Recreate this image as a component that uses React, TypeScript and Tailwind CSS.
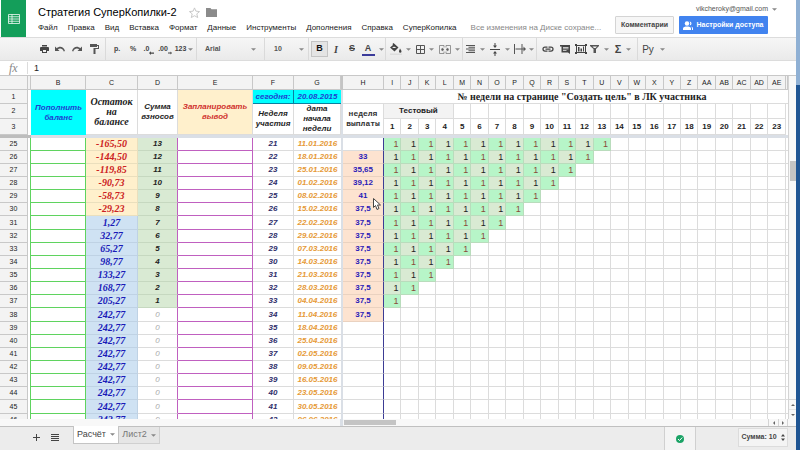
import type { ReactNode } from 'react';

const menu = [
  'Файл',
  'Правка',
  'Вид',
  'Вставка',
  'Формат',
  'Данные',
  'Инструменты',
  'Дополнения',
  'Справка',
  'СуперКопилка',
];

const weekColumns = [
  'I', 'J', 'K', 'L', 'M', 'N', 'O', 'P', 'Q', 'R', 'S', 'T',
  'U', 'V', 'W', 'X', 'Y', 'Z', 'AA', 'AB', 'AC', 'AD', 'AE',
];

type Row = {
  id: number;
  balance: string;
  sum: number;
  week: number;
  date: string;
  payout: string;
};

const rows: Row[] = [
  { id: 25, balance: '-165,50', sum: 13, week: 21, date: '11.01.2016', payout: '' },
  { id: 26, balance: '-144,50', sum: 12, week: 22, date: '18.01.2016', payout: '33' },
  { id: 27, balance: '-119,85', sum: 11, week: 23, date: '25.01.2016', payout: '35,65' },
  { id: 28, balance: '-90,73', sum: 10, week: 24, date: '01.02.2016', payout: '39,12' },
  { id: 29, balance: '-58,73', sum: 9, week: 25, date: '08.02.2016', payout: '41' },
  { id: 30, balance: '-29,23', sum: 8, week: 26, date: '15.02.2016', payout: '37,5' },
  { id: 31, balance: '1,27', sum: 7, week: 27, date: '22.02.2016', payout: '37,5' },
  { id: 32, balance: '32,77', sum: 6, week: 28, date: '29.02.2016', payout: '37,5' },
  { id: 33, balance: '65,27', sum: 5, week: 29, date: '07.03.2016', payout: '37,5' },
  { id: 34, balance: '98,77', sum: 4, week: 30, date: '14.03.2016', payout: '37,5' },
  { id: 35, balance: '133,27', sum: 3, week: 31, date: '21.03.2016', payout: '37,5' },
  { id: 36, balance: '168,77', sum: 2, week: 32, date: '28.03.2016', payout: '37,5' },
  { id: 37, balance: '205,27', sum: 1, week: 33, date: '04.04.2016', payout: '37,5' },
  { id: 38, balance: '242,77', sum: 0, week: 34, date: '11.04.2016', payout: '37,5' },
  { id: 39, balance: '242,77', sum: 0, week: 35, date: '18.04.2016', payout: '' },
  { id: 40, balance: '242,77', sum: 0, week: 36, date: '25.04.2016', payout: '' },
  { id: 41, balance: '242,77', sum: 0, week: 37, date: '02.05.2016', payout: '' },
  { id: 42, balance: '242,77', sum: 0, week: 38, date: '09.05.2016', payout: '' },
  { id: 43, balance: '242,77', sum: 0, week: 39, date: '16.05.2016', payout: '' },
  { id: 44, balance: '242,77', sum: 0, week: 40, date: '23.05.2016', payout: '' },
  { id: 45, balance: '242,77', sum: 0, week: 41, date: '30.05.2016', payout: '' },
  { id: 46, balance: '242,77', sum: 0, week: 42, date: '06.06.2016', payout: '' },
];

const line = 'border-r border-b border-[#dcdcdc]';
const head = 'border-r border-b border-[#c8c8c8] bg-[#f3f3f3] text-[7px] font-normal text-[#222]';

function Caret() {
  return (
    <svg viewBox="0 0 6 3" className="h-[3px] w-[5px] shrink-0 fill-[#888]">
      <path d="M0 0h6L3 3z" />
    </svg>
  );
}

function Tool({ label, width, children }: { label: string; width: string; children: ReactNode }) {
  return (
    <button
      type="button"
      aria-label={label}
      className={`flex h-4 shrink-0 items-center justify-center text-[7px] font-bold text-[#444] ${width}`}
    >
      {children}
    </button>
  );
}

function Divider() {
  return <span className="h-full w-px shrink-0 bg-[#dadada]" />;
}

function Toolbar() {
  return (
    <div className="flex h-6 shrink-0 items-center border-y border-[#dcdcdc] bg-linear-to-b from-[#f6f6f6] to-[#eaeaea] pl-9">
      <Tool label="Печать" width="w-4">
        <svg viewBox="0 0 18 16" className="h-2 w-[9px] fill-[#444]">
          <path d="M4 0h10v3H4zM2 4h14a2 2 0 0 1 2 2v6h-4v4H4v-4H0V6a2 2 0 0 1 2-2zm4 6v4h6v-4z" fillRule="evenodd" />
        </svg>
      </Tool>
      <Tool label="Отменить" width="w-4">
        <svg viewBox="0 0 20 12" className="h-[6px] w-[10px] fill-[#555]">
          <path d="M0 1v9h9L5.700 6.700C9 4 15 4 17.500 11l2.500-1C17 0 8 0 3.600 4.600z" />
        </svg>
      </Tool>
      <Tool label="Повторить" width="w-[18px]">
        <svg viewBox="0 0 20 12" className="h-[6px] w-[10px] fill-[#555]">
          <path d="M20 1v9h-9l3.300-3.300C11 4 5 4 2.500 11L0 10C3 0 12 0 16.400 4.600z" />
        </svg>
      </Tool>
      <Tool label="Копировать форматирование" width="w-4">
        <svg viewBox="0 0 18 20" className="h-[10px] w-[9px] fill-[#555]">
          <path d="M0 0h14v2h4v8h-7v10H7V8h9V4h-2v2H0z" />
        </svg>
      </Tool>
      <span className="w-[3px] shrink-0" />
      <Divider />
      <span className="w-[3px] shrink-0" />
      <Tool label="Рубли" width="w-4">р.</Tool>
      <Tool label="Проценты" width="w-4">%</Tool>
      <Tool label="Меньше знаков" width="w-4">
        <span>.0</span>
        <svg viewBox="0 0 8 6" className="mt-2 h-[4px] w-[5px] fill-[#444]">
          <path d="M0 3l3-3v2h5v2H3v2z" />
        </svg>
      </Tool>
      <Tool label="Больше знаков" width="w-4">
        <span>.00</span>
        <svg viewBox="0 0 8 6" className="mt-2 h-[4px] w-[4px] fill-[#444]">
          <path d="M8 3L5 0v2H0v2h5v2z" />
        </svg>
      </Tool>
      <Tool label="Другие форматы" width="w-[22px] gap-[2px]">
        123 <Caret />
      </Tool>
      <span className="w-px shrink-0" />
      <Divider />
      <button type="button" className="flex h-4 w-[67px] shrink-0 items-center justify-between pr-2 pl-2 text-[7px] font-bold text-[#555]">
        Arial <Caret />
      </button>
      <Divider />
      <button type="button" className="flex h-4 w-[43px] shrink-0 items-center justify-between pr-1 pl-[9px] text-[7px] font-bold text-[#555]">
        10 <Caret />
      </button>
      <Divider />
      <Tool label="Полужирный" width="ml-[2px] w-[17px] border border-[#c4c4c4] bg-[#e4e4e4]">
        <span className="text-[9px] font-black text-[#111]">B</span>
      </Tool>
      <Tool label="Курсив" width="w-4">
        <span className="font-['Liberation_Serif',serif] text-[10px] italic">I</span>
      </Tool>
      <Tool label="Зачеркнутый" width="w-4">
        <span className="text-[9px] line-through">S</span>
      </Tool>
      <Tool label="Цвет текста" width="w-[25px] gap-[4px]">
        <span className="w-[13px] border-b-2 border-[#3b3b9a] text-[9px] leading-[11px]">A</span>
        <Caret />
      </Tool>
      <Divider />
      <Tool label="Цвет заливки" width="w-[28px] gap-[4px]">
        <svg viewBox="0 0 24 24" className="h-3 w-3 fill-[#444]">
          <path d="M7 0l10 9-8 8-9-8 6-5-1-2zM8 7L4 10h9zM20 11s3 4 3 6a2.500 2.500 0 0 1-5 0c0-2 2-6 2-6z" />
          <path d="M0 21h24v3H0z" className="fill-[#ddd]" />
        </svg>
        <Caret />
      </Tool>
      <Tool label="Границы" width="w-[22px] gap-[4px]">
        <svg viewBox="0 0 18 18" className="h-[9px] w-[9px] fill-none stroke-[#555] stroke-2">
          <path d="M1 1h16v16H1zM9 1v16M1 9h16" />
        </svg>
        <Caret />
      </Tool>
      <Tool label="Объединить ячейки" width="w-[26px] gap-[4px]">
        <svg viewBox="0 0 24 18" className="h-[9px] w-3 fill-[#555] stroke-[#777] stroke-[1.500]">
          <path d="M10 1H1v16h9M14 1h9v16h-9M10 1v4M14 1v4M10 13v4M14 13v4" fill="none" />
          <path d="M4 9h2V6l4 3-4 3V9M20 9h-2V6l-4 3 4 3V9" />
        </svg>
        <Caret />
      </Tool>
      <Divider />
      <Tool label="Выравнивание по горизонтали" width="w-[25px] gap-[5px]">
        <svg viewBox="0 0 18 16" className="h-2 w-[9px] fill-none stroke-[#555] stroke-2">
          <path d="M0 1h18M5 4.500h13M0 8h18M5 11.500h13M0 15h18" />
        </svg>
        <Caret />
      </Tool>
      <Tool label="Выравнивание по вертикали" width="w-[24px] gap-[5px]">
        <svg viewBox="0 0 20 26" className="h-[13px] w-[10px] fill-[#444]">
          <path d="M0 12h20v2H0zM9 0h2v5h3l-4 5-4-5h3zM9 26h2v-5h3l-4-5-4 5h3z" />
        </svg>
        <Caret />
      </Tool>
      <Tool label="Перенос текста" width="w-[24px] gap-[3px]">
        <svg viewBox="0 0 24 20" className="h-[10px] w-3 fill-[#555]">
          <path d="M0 0h2v20H0zM15 0h2v20h-2zM3 9h16V5l5 5-5 5v-4H3z" />
        </svg>
        <Caret />
      </Tool>
      <Divider />
      <Tool label="Вставить ссылку" width="ml-[2px] w-[17px]">
        <svg viewBox="0 0 24 12" className="h-[6px] w-3 fill-none stroke-[#444] stroke-[2.500]">
          <path d="M11 2H6a4 4 0 0 0 0 8h5M13 2h5a4 4 0 0 1 0 8h-5M7 6h10" />
        </svg>
      </Tool>
      <Tool label="Вставить комментарий" width="w-[17px]">
        <svg viewBox="0 0 20 18" className="h-[9px] w-[10px] fill-[#444]">
          <path d="M0 0h20v18l-4-3H3V3H0zM6 4v1.500h11V4zm0 3v1.500h11V7zm0 3v1.500h7V10z" fillRule="evenodd" />
        </svg>
      </Tool>
      <Tool label="Вставить диаграмму" width="w-[15px]">
        <svg viewBox="0 0 24 20" className="h-[10px] w-3 fill-[#444]">
          <path d="M0 0h4v2h16V0h4v4h-2v12h2v4h-4v-2H4v2H0v-4h2V4H0zm4 4v12h16V4zM6 6h3v9H6zM11 9h3v6h-3zM16 5h2v10h-2z" fillRule="evenodd" />
        </svg>
      </Tool>
      <Tool label="Фильтр" width="w-[23px] gap-[5px]">
        <svg viewBox="0 0 18 16" className="h-2 w-[9px] fill-[#555]">
          <path d="M0 0h18v2l-6 6v8H7V8L0 2zM5 3l3 3h3l3-3z" fillRule="evenodd" />
        </svg>
        <Caret />
      </Tool>
      <Tool label="Функции" width="w-[24px] gap-[5px]">
        <span className="text-[11px]">Σ</span>
        <Caret />
      </Tool>
      <span className="w-[2px] shrink-0" />
      <Divider />
      <Tool label="Способ ввода" width="w-[31px] gap-[6px]">
        <span className="text-[10px] font-normal">Ру</span>
        <Caret />
      </Tool>
    </div>
  );
}

function Header() {
  return (
    <header className="flex h-[37px] shrink-0 pl-px">
      <a href="#" aria-label="Таблицы" className="flex w-[25px] shrink-0 items-center justify-center bg-[#149e5a]">
        <svg viewBox="0 0 24 20" className="h-[10px] w-3 fill-none stroke-white stroke-[1.500]">
          <path d="M1 1h22v18H1zM1 5.500h22M1 10h22M1 14.500h22M8 1v18" />
        </svg>
      </a>
      <div className="min-w-0 flex-1 pt-1 pl-3">
        <div className="flex h-[17px] items-center">
          <h1 className="text-[11px] text-black">Стратегия СуперКопилки-2</h1>
          <button type="button" aria-label="Пометить" className="ml-3">
            <svg viewBox="0 0 24 24" className="h-[11px] w-[11px] fill-none stroke-[#c4c4c4] stroke-2">
              <path d="M12 2l3 7 8 1-6 5 2 8-7-4-7 4 2-8-6-5 8-1z" />
            </svg>
          </button>
          <button type="button" aria-label="Переместить" className="ml-[6px]">
            <svg viewBox="0 0 20 16" className="h-[9px] w-[11px] fill-[#8b8b8b]">
              <path d="M0 0h8l2 2h10v14H0z" />
            </svg>
          </button>
        </div>
        <nav className="flex h-[14px] items-center gap-[10px] text-[8px] whitespace-nowrap text-[#222]">
          {menu.map((item) => (
            <button key={item} type="button">
              {item}
            </button>
          ))}
          <span className="ml-1 text-[#888]">Все изменения на Диске сохране...</span>
        </nav>
      </div>
      <div className="flex shrink-0 flex-col items-end gap-[2px] pt-1 pr-7 pl-1">
        <button type="button" className="-mr-[9px] flex h-[10px] items-center gap-1 text-[7px] text-[#555]">
          vikcheroky@gmail.com <Caret />
        </button>
        <div className="flex gap-[5px] text-[7px] font-bold whitespace-nowrap">
          <button type="button" className="h-[18px] w-[59px] rounded-[1px] border border-[#d4d4d4] bg-[#f6f6f6] text-[#444]">
            Комментарии
          </button>
          <button type="button" className="flex h-[18px] w-[89px] items-center justify-center gap-[3px] rounded-[1px] bg-[#4183ef] text-white">
            <svg viewBox="0 0 20 18" className="h-[9px] w-[10px] shrink-0 fill-white">
              <circle cx="8" cy="5" r="4.500" />
              <path d="M0 18v-3c0-3 4-4 8-4s8 1 8 4v3zM13 1a4 4 0 0 1 0 8c2-3 2-5 0-8zM16 11c3 1 4 2 4 4v3h-2v-3c0-2-1-3-2-4z" />
            </svg>
            Настройки доступа
          </button>
        </div>
      </div>
    </header>
  );
}

function SheetHead() {
  return (
    <thead>
      <tr className="h-[14px]">
        <th className={head} />
        <th className={head} aria-label="A" />
        {['B', 'C', 'D', 'E', 'F', 'G'].map((name) => (
          <th key={name} className={head}>{name}</th>
        ))}
        <th className="bg-[#c4c4c4]" />
        <th className={head}>H</th>
        {weekColumns.map((name) => (
          <th key={name} className={head}>{name}</th>
        ))}
        <th className={head} />
      </tr>
      <tr className="h-[14px]">
        <th className={head}>1</th>
        <td />
        <th rowSpan={3} className="bg-[#00ffff] leading-[10px] text-[#1f3fd0] italic">
          Пополнить баланс
        </th>
        <th rowSpan={3} className={`${line} px-1 font-['Liberation_Serif',serif] text-[10px] leading-[10px] italic`}>
          Остаток на балансе
        </th>
        <th rowSpan={3} className={`${line} leading-[10px] italic`}>Сумма взносов</th>
        <th rowSpan={3} className={`${line} bg-[#fff0cc] leading-[10px] text-[#d0312d] italic`}>
          Запланировать вывод
        </th>
        <th className="border-r border-b border-[#0a7f9f] bg-[#00ffff] text-[#1f3fd0] italic">сегодня:</th>
        <th className="border-b border-[#0a7f9f] bg-[#00ffff] text-[#1f3fd0] italic">20.08.2015</th>
        <td className="bg-[#dadfe6]" />
        <td className="border-b border-[#dcdcdc]" />
        <th colSpan={24} className="border-b border-[#dcdcdc] pr-2 font-['Liberation_Serif',serif] text-[10px]">
          № недели на странице "Создать цель" в ЛК участника
        </th>
      </tr>
      <tr className="h-[15px]">
        <th className={head}>2</th>
        <td />
        <th rowSpan={2} className={`${line} leading-[10px] italic`}>Неделя участия</th>
        <th rowSpan={2} className={`${line} px-2 leading-[10px] italic`}>дата начала недели</th>
        <td className="bg-[#dadfe6]" />
        <th rowSpan={2} className={`${line} font-['Liberation_Mono',monospace] leading-[10px] text-[#333]`}>
          неделя выплаты
        </th>
        <th colSpan={4} className={`${line} bg-[#f3f3f3]`}>Тестовый</th>
        {weekColumns.slice(4).map((name) => (
          <td key={name} className={line} />
        ))}
        <td />
      </tr>
      <tr className="h-4">
        <th className={head}>3</th>
        <td />
        <td className="bg-[#dadfe6]" />
        {weekColumns.map((name, i) => (
          <th key={name} className={line}>{i + 1}</th>
        ))}
        <td />
      </tr>
      <tr className="h-[3px]">
        <td colSpan={2} className="bg-[#bdbdbd]" />
        <td colSpan={32} className="bg-[#dadfe6]" />
      </tr>
    </thead>
  );
}

function SheetRow({ row }: { row: Row }) {
  const negative = row.balance.startsWith('-');
  return (
    <tr className="h-[13px] nth-[7n]:h-[14px]">
      <th className={head}>{row.id}</th>
      <td className="border-r border-[#5fd35f]" />
      <td className="border-r border-b border-[#5fd35f]" />
      <td
        className={`border-r border-b font-['Liberation_Serif',serif] text-[10px] font-bold italic ${
          negative ? 'border-[#eadfbd] bg-[#fff0cc] text-[#cc2222]' : 'border-[#bfd2e4] bg-[#cfe2f3] text-[#1a1ab8]'
        }`}
      >
        {row.balance}
      </td>
      <td
        className={`border-r border-b border-r-[#c060c0] italic ${
          row.sum > 0 ? 'border-b-[#c6d8c0] bg-[#d9ead3] font-bold text-[#222]' : 'border-b-[#dcdcdc] text-[#aaa]'
        }`}
      >
        {row.sum}
      </td>
      <td className="border-r border-b border-[#c060c0]" />
      <td className={`${line} font-bold text-[#2f2f6b] italic`}>{row.week}</td>
      <td className="border-b border-[#dcdcdc] font-bold text-[#e69a38] italic">{row.date}</td>
      <td className="bg-[#dadfe6]" />
      <td
        className={`border-r border-b border-r-[#3c3c94] font-bold text-[#2a1ab8] ${
          row.payout ? 'border-b-[#ead2c0] bg-[#fde3d0]' : 'border-b-[#dcdcdc]'
        }`}
      >
        {row.payout}
      </td>
      {weekColumns.map((name, i) => {
        if (i >= row.sum) return <td key={name} className={line} />;
        const bright = (row.sum - i) % 2 === 1;
        return (
          <td
            key={name}
            className={`border-r border-b border-[#b9dcbc] pr-[2px] text-right text-[9px] ${
              bright ? 'bg-[#b7f5c8] text-[#8a4a3a]' : 'bg-[#d9ead3] text-[#222]'
            }`}
          >
            1
          </td>
        );
      })}
      <td className="border-b border-[#dcdcdc]" />
    </tr>
  );
}

function Sheet() {
  return (
    <table className="w-full table-fixed border-separate border-spacing-0 text-center text-[8px] leading-3 text-[#222]">
      <colgroup>
        <col className="w-[28px]" />
        <col className="w-[3px]" />
        <col className="w-[55px]" />
        <col className="w-[52px]" />
        <col className="w-[40px]" />
        <col className="w-[75px]" />
        <col className="w-[41px]" />
        <col className="w-[47px]" />
        <col className="w-[2px]" />
        <col className="w-[41px]" />
        {weekColumns.map((name) => (
          <col key={name} />
        ))}
        <col className="w-[2px]" />
      </colgroup>
      <SheetHead />
      <tbody>
        {rows.map((row) => (
          <SheetRow key={row.id} row={row} />
        ))}
      </tbody>
    </table>
  );
}

function VerticalScroll() {
  return (
    <div className="flex w-2 shrink-0 flex-col border-l border-[#d4d4d4] bg-[#f8f8f8]">
      <div className="h-[85px]" />
      <div className="ml-px h-5 bg-[#c4c4c4]" />
      <div className="flex-1" />
      <button type="button" aria-label="Вверх" className="flex h-[10px] items-center justify-center border-t border-[#d4d4d4]">
        <svg viewBox="0 0 6 3" className="h-[2px] w-1 fill-[#666]"><path d="M0 3h6L3 0z" /></svg>
      </button>
      <button type="button" aria-label="Вниз" className="flex h-[10px] items-center justify-center border-t border-[#e4e4e4]">
        <svg viewBox="0 0 6 3" className="h-[2px] w-1 fill-[#666]"><path d="M0 0h6L3 3z" /></svg>
      </button>
    </div>
  );
}

function HorizontalScroll() {
  return (
    <div className="flex h-[7px] shrink-0 bg-[#f8f8f8] pr-2">
      <div className="w-[340px] shrink-0" />
      <div className="w-[3px] shrink-0 bg-[#dadfe6]" />
      <div className="mt-px ml-px h-[5px] w-[52px] bg-[#c4c4c4]" />
      <div className="flex-1" />
      <button type="button" aria-label="Влево" className="flex w-[10px] items-center justify-center border-l border-[#d4d4d4]">
        <svg viewBox="0 0 3 6" className="h-1 w-[2px] fill-[#666]"><path d="M3 0v6L0 3z" /></svg>
      </button>
      <button type="button" aria-label="Вправо" className="flex w-[10px] items-center justify-center border-x border-[#d4d4d4]">
        <svg viewBox="0 0 3 6" className="h-1 w-[2px] fill-[#666]"><path d="M0 0v6l3-3z" /></svg>
      </button>
    </div>
  );
}

function BottomBar() {
  return (
    <footer className="flex h-6 shrink-0 border-t border-[#c0c0c0] bg-[#ececec] pr-2 text-[9px]">
      <button type="button" aria-label="Добавить лист" className="ml-[30px] flex h-5 w-3 items-center justify-center">
        <svg viewBox="0 0 14 14" className="h-[7px] w-[7px] fill-[#444]"><path d="M6 0h2v6h6v2H8v6H6V8H0V6h6z" /></svg>
      </button>
      <button type="button" aria-label="Все листы" className="ml-[7px] flex h-5 w-3 items-center justify-center">
        <svg viewBox="0 0 16 14" className="h-[7px] w-2 fill-none stroke-[#444] stroke-2"><path d="M0 1h16M0 5h16M0 9h16M0 13h16" /></svg>
      </button>
      <button type="button" className="-mt-px ml-3 flex h-[18px] w-[46px] items-center justify-center gap-1 border border-t-0 border-[#c4c4c4] bg-white text-[#444]">
        Расчёт <Caret />
      </button>
      <button type="button" className="flex h-[17px] w-[41px] items-center justify-center gap-1 border-r border-b border-[#d0d0d0] bg-[#e6e6e6] text-[#777]">
        Лист2 <Caret />
      </button>
      <div className="flex-1" />
      <div className="flex w-8 items-center justify-center border-x border-[#d0d0d0] bg-[#f4f4f4]">
        <svg viewBox="0 0 16 16" className="h-2 w-2">
          <circle cx="8" cy="8" r="8" fill="#1ba366" />
          <path d="M4 8l3 3 5.500-6" fill="none" stroke="#fff" strokeWidth="2" />
        </svg>
      </div>
      <button type="button" className="mt-px ml-[42px] flex h-[19px] w-[50px] items-center justify-center gap-1 border border-[#dcdcdc] bg-[#f4f4f4] text-[7px] font-bold whitespace-nowrap text-[#444]">
        Сумма: 10
        <svg viewBox="0 0 8 14" className="h-[7px] w-1 fill-[#444]"><path d="M0 5l4-5 4 5zM0 9h8l-4 5z" /></svg>
      </button>
    </footer>
  );
}

export default function App() {
  return (
    <div className="relative flex h-screen overflow-hidden bg-white font-['Liberation_Sans',Arial,sans-serif]">
      <main className="flex min-w-0 flex-1 flex-col">
        <Header />
        <Toolbar />
        <label className="flex h-[14px] shrink-0 items-center text-[9px] text-[#222]">
          <span className="w-7 border-r border-[#dcdcdc] pl-[9px] font-['Liberation_Serif',serif] text-[12px] leading-3 text-[#888] italic">
            fx
          </span>
          <input aria-label="Формула" defaultValue="1" className="min-w-0 flex-1 pl-[6px] leading-3 outline-none" />
        </label>
        <div className="flex min-h-0 flex-1 border-t border-[#c8c8c8]">
          <div className="min-w-0 flex-1 overflow-hidden">
            <Sheet />
          </div>
          <VerticalScroll />
        </div>
        <HorizontalScroll />
        <BottomBar />
      </main>
      <div className="flex w-1 shrink-0 flex-col">
        <div className="h-[85px] bg-[#8fb0d4]" />
        <div className="flex-1 bg-[#1f5593]" />
      </div>
      <svg viewBox="0 0 16 24" className="absolute top-[198px] left-[373px] h-3 w-2 fill-white stroke-[#444] stroke-2">
        <path d="M1 1v18l4-4 3 8 4-2-3-7h6z" />
      </svg>
    </div>
  );
}
